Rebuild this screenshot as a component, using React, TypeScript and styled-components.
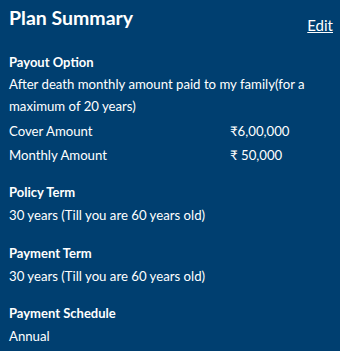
import React from 'react';
import styled, { createGlobalStyle } from 'styled-components';

const GlobalStyle = createGlobalStyle`
  html, body {
    margin: 0;
    padding: 0;
    background: #003f70;
  }
  * { box-sizing: border-box; }
`

const Card = styled.div`
  width: 340px;
  height: 351px;
  background: #003f70;
  color: #ffffff;
  font-family: Lato, "Liberation Sans", sans-serif;
  padding: 6px 7px 0 9px;
  overflow: hidden;
`

const Header = styled.div`
  display: flex;
  justify-content: space-between;
  align-items: flex-start;
  height: 45px;
`

const Title = styled.h2`
  margin: 0;
  font-size: 19.5px;
  font-weight: 700;
  line-height: 24px;
`

const EditLink = styled.a`
  margin-top: 9px;
  font-size: 15px;
  line-height: 20px;
  color: #ffffff;
  text-decoration: underline;
  cursor: pointer;
`

const Section = styled.div<{ $gap?: number }>`
  margin-bottom: ${p => p.$gap ?? 14.5}px;
`

const Label = styled.div`
  font-size: 13px;
  font-weight: 700;
  line-height: 22px;
`

const Text = styled.div<{ $line?: number }>`
  font-size: 13.2px;
  line-height: ${p => p.$line ?? 22}px;
`

const Rows = styled.div`
  margin-top: 2px;
`

const Row = styled.div`
  display: grid;
  grid-template-columns: 221px 1fr;
  font-size: 13.2px;
  line-height: 24px;
`

interface Item {
  label: string;
  value: string;
}

const terms: Item[] = [
  { label: 'Policy Term', value: '30 years (Till you are 60 years old)' },
  { label: 'Payment Term', value: '30 years (Till you are 60 years old)' },
  { label: 'Payment Schedule', value: 'Annual' },
]

const App = () => {
  return (
    <>
      <GlobalStyle />
      <Card>
        <Header>
          <Title>Plan Summary</Title>
          <EditLink>Edit</EditLink>
        </Header>
        <Section $gap={14}>
          <Label>Payout Option</Label>
          <Text>After death monthly amount paid to my family(for a maximum of 20 years)</Text>
          <Rows>
            <Row><span>Cover Amount</span><span>₹6,00,000</span></Row>
            <Row><span>Monthly Amount</span><span>₹ 50,000</span></Row>
          </Rows>
        </Section>
        {terms.map(t => (
          <Section key={t.label}>
            <Label>{t.label}</Label>
            <Text $line={24}>{t.value}</Text>
          </Section>
        ))}
      </Card>
    </>
  );
};

export default App;
